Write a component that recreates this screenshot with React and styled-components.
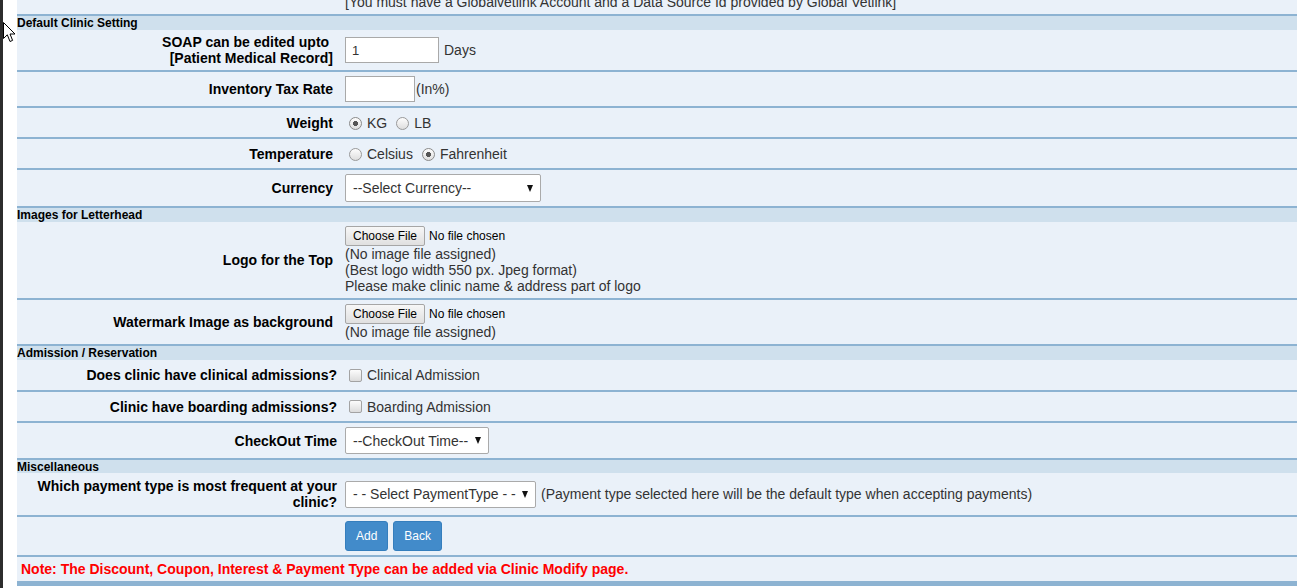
import React from 'react';
import styled, { createGlobalStyle } from 'styled-components';

const GlobalStyle = createGlobalStyle`
  body {
    margin: 0;
    background: #fff;
    font-family: Arial, "Liberation Sans", sans-serif;
  }
`;

const Page = styled.div`
  position: relative;
  display: flex;
  height: 588px;
  overflow: hidden;
  border-left: 3px solid #2d2d2d;
  padding-left: 14px;
`;

const Form = styled.div`
  flex: 1;
  margin-top: -20px;
`;

const Row = styled.div`
  display: grid;
  grid-template-columns: 325px 1fr;
  align-items: ${(p) => (p.$bottom ? 'end' : 'center')};
  min-height: ${(p) => p.$minH || 0}px;
  background: #eaf1f9;
  border-bottom: 2px solid #8db3d2;
`;

const Section = styled.div`
  height: ${(p) => p.$h || 14}px;
  background: #cfe0ed;
  color: #000;
  font-size: 12px;
  font-weight: bold;
  line-height: 14px;
  white-space: nowrap;
`;

const Label = styled.div`
  padding: 4px ${(p) => p.$pad}px 4px 4px;
  text-align: right;
  color: #000;
  font-size: 14px;
  font-weight: bold;
  line-height: 16px;
`;

const Value = styled.div`
  display: flex;
  flex-direction: ${(p) => (p.$column ? 'column' : 'row')};
  align-items: ${(p) => (p.$column ? 'flex-start' : 'center')};
  padding: 4px 3px;
  color: #333;
  font-size: 14px;
  line-height: 16px;
  white-space: nowrap;
`;

const TextInput = styled.input`
  box-sizing: border-box;
  width: ${(p) => p.$w}px;
  height: 26px;
  margin: 0 ${(p) => p.$gap || 0}px 0 0;
  padding: 0 6px;
  border: 1px solid #a9a9a9;
  background: #fff;
  color: #333;
  font-family: Arial, "Liberation Sans", sans-serif;
  font-size: 13px;
  outline: none;
`;

const Choice = styled.label`
  display: inline-flex;
  align-items: center;
  height: ${(p) => p.$h || 21}px;
  margin-right: 5px;
  color: #333;
`;

const Radio = styled.input.attrs({ type: 'radio' })`
  appearance: none;
  box-sizing: border-box;
  width: 13px;
  height: 13px;
  margin: 1px 5px 0 4px;
  border: 1px solid #999;
  border-radius: 50%;
  background: linear-gradient(#fdfdfd, #dedede);
  &:checked {
    border-color: #8a8a8a;
    background: radial-gradient(circle, #555 0 2.3px, transparent 2.8px),
      linear-gradient(#fdfdfd, #dedede);
  }
`;

const Checkbox = styled.input.attrs({ type: 'checkbox' })`
  appearance: none;
  box-sizing: border-box;
  width: 13px;
  height: 13px;
  margin: 0 5px 0 4px;
  border: 1px solid #a3a3a3;
  border-radius: 2px;
  background: linear-gradient(#fcfcfc, #dcdcdc);
`;

const SelectBox = styled.div`
  box-sizing: border-box;
  display: flex;
  align-items: center;
  justify-content: space-between;
  width: ${(p) => p.$w}px;
  height: ${(p) => p.$h}px;
  margin-right: ${(p) => p.$gap || 0}px;
  padding: 0 7px 0 7px;
  border: 1px solid #aaa;
  border-radius: 2px;
  background: #fff;
  color: #333;
  font-size: 14px;
`;

const Caret = styled.span`
  width: 0;
  height: 0;
  border-left: 3.5px solid transparent;
  border-right: 3.5px solid transparent;
  border-top: 7px solid #111;
`;

const FileLine = styled.div`
  display: flex;
  align-items: center;
  height: 20px;
  color: #000;
  font-size: 12px;
`;

const FileButton = styled.span`
  box-sizing: border-box;
  display: inline-flex;
  align-items: center;
  height: 20px;
  margin-right: 4px;
  padding: 0 7px;
  border: 1px solid #a6a6a6;
  border-radius: 2px;
  background: linear-gradient(#f7f7f7, #e0e0e0);
  color: #000;
  font-size: 12px;
`;

const Button = styled.button`
  height: 30px;
  margin-right: 5px;
  padding: 0 10px;
  border: 1px solid #357ebd;
  border-radius: 3px;
  background: #428bca;
  color: #fff;
  font-family: Arial, "Liberation Sans", sans-serif;
  font-size: 12px;
`;

const NoteRow = styled.div`
  padding: 4px 4px;
  background: #eaf1f9;
  border-bottom: 5px solid #8db3d2;
  color: #f00;
  font-size: 14px;
  font-weight: bold;
  line-height: 16px;
`;

const Cursor = styled.svg`
  position: absolute;
  left: 0;
  top: 22px;
  width: 13px;
  height: 21px;
`;

const Field = ({ label, pad = 9, minH, children, column }) => (
  <Row $minH={minH}>
    <Label $pad={pad}>{label}</Label>
    <Value $column={column}>{children}</Value>
  </Row>
);

const FilePicker = () => (
  <FileLine>
    <FileButton>Choose File</FileButton>
    No file chosen
  </FileLine>
);

export default function App() {
  return (
    <>
      <GlobalStyle />
      <Page>
        <Form>
          <Row $bottom $minH={34}>
            <div />
            <Value>[You must have a Globalvetlink Account and a Data Source Id provided by Global Vetlink]</Value>
          </Row>

          <Section>Default Clinic Setting</Section>
          <Field
            label={
              <>
                SOAP can be edited upto{'\u00a0'}
                <br />
                [Patient Medical Record]
              </>
            }
          >
            <TextInput $w={94} $gap={5} defaultValue="1" />
            Days
          </Field>
          <Field label="Inventory Tax Rate">
            <TextInput $w={70} $gap={1} />
            (In%)
          </Field>
          <Field label="Weight">
            <Choice>
              <Radio name="weight" defaultChecked />
              KG
            </Choice>
            <Choice>
              <Radio name="weight" />
              LB
            </Choice>
          </Field>
          <Field label="Temperature">
            <Choice>
              <Radio name="temp" />
              Celsius
            </Choice>
            <Choice>
              <Radio name="temp" defaultChecked />
              Fahrenheit
            </Choice>
          </Field>
          <Field label="Currency">
            <SelectBox $w={196} $h={28}>
              --Select Currency--
              <Caret />
            </SelectBox>
          </Field>

          <Section>Images for Letterhead</Section>
          <Field label="Logo for the Top" column>
            <FilePicker />
            <span>(No image file assigned)</span>
            <span>(Best logo width 550 px. Jpeg format)</span>
            <span>Please make clinic name &amp; address part of logo</span>
          </Field>
          <Field label="Watermark Image as background" column>
            <FilePicker />
            <span>(No image file assigned)</span>
          </Field>

          <Section>Admission / Reservation</Section>
          <Field label="Does clinic have clinical admissions?" pad={5}>
            <Choice $h={22}>
              <Checkbox />
              Clinical Admission
            </Choice>
          </Field>
          <Field label="Clinic have boarding admissions?" pad={5}>
            <Choice>
              <Checkbox />
              Boarding Admission
            </Choice>
          </Field>
          <Field label="CheckOut Time" pad={5}>
            <SelectBox $w={144} $h={27}>
              --CheckOut Time--
              <Caret />
            </SelectBox>
          </Field>

          <Section $h={13}>Miscellaneous</Section>
          <Field label="Which payment type is most frequent at your clinic?" pad={5} minH={42}>
            <SelectBox $w={191} $h={27} $gap={5}>
              - - Select PaymentType - -
              <Caret />
            </SelectBox>
            (Payment type selected here will be the default type when accepting payments)
          </Field>
          <Row>
            <div />
            <Value>
              <Button>Add</Button>
              <Button>Back</Button>
            </Value>
          </Row>
          <NoteRow>Note: The Discount, Coupon, Interest &amp; Payment Type can be added via Clinic Modify page.</NoteRow>
        </Form>
        <Cursor viewBox="0 0 13 21">
          <path
            d="M0.5 0.5 L0.5 16.5 L4.3 12.8 L7 19.5 L9.6 18.4 L7 12 L12 12 Z"
            fill="#fff"
            stroke="#000"
            strokeWidth="1"
            strokeLinejoin="round"
          />
        </Cursor>
      </Page>
    </>
  );
}
